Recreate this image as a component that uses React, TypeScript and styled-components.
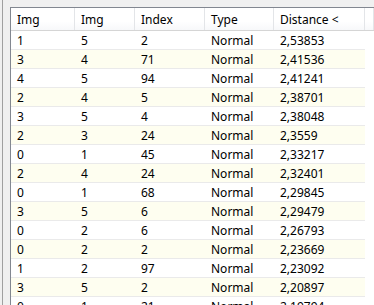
import React from 'react';
import styled, { createGlobalStyle } from 'styled-components';

const GlobalStyle = createGlobalStyle`
  html, body {
    margin: 0;
    padding: 0;
    background: #f0f0f0;
    overflow: hidden;
  }
  body {
    font-family: "Noto Sans", "Liberation Sans", sans-serif;
    font-size: 12px;
    color: #000;
  }
`;

const COLUMNS = '64px 60px 70px 69px 91px 1fr';

const Page = styled.div`
  height: 305px;
  padding-left: 2px;
  display: flex;
`;

const Splitter = styled.div`
  flex: 1;
  display: flex;
  border-left: 1px solid #a0a0a0;
  padding: 7px 0 0 7px;
`;

const ListView = styled.div`
  flex: 1;
  background: #fff;
  border-left: 1px solid #828790;
  border-top: 1px solid #828790;
  overflow: hidden;
`;

const HeaderRow = styled.div`
  display: grid;
  grid-template-columns: ${COLUMNS};
  height: 22px;
  background: linear-gradient(#ffffff, #ffffff 60%, #f7f8fa);
  border-bottom: 1px solid #d5d5d5;
`;

const HeaderCell = styled.div`
  display: flex;
  align-items: center;
  padding-left: 6px;
  border-right: 1px solid #e3e5e8;
  white-space: nowrap;
`;

const Row = styled.div<{ $striped: boolean }>`
  display: grid;
  grid-template-columns: ${COLUMNS};
  height: 19px;
  background: ${(p) => (p.$striped ? '#fefef0' : '#fff')};
`;

const Cell = styled.div`
  display: flex;
  align-items: center;
  padding-left: 6px;
  white-space: nowrap;
  border-bottom: 1px solid #eaeaea;
`;

const Filler = styled.div`
  background: #fff;
`;

const headers = ['Img', 'Img', 'Index', 'Type', 'Distance <'];

const rows: [number, number, number, string, string][] = [
  [1, 5, 2, 'Normal', '2,53853'],
  [3, 4, 71, 'Normal', '2,41536'],
  [4, 5, 94, 'Normal', '2,41241'],
  [2, 4, 5, 'Normal', '2,38701'],
  [3, 5, 4, 'Normal', '2,38048'],
  [2, 3, 24, 'Normal', '2,3559'],
  [0, 1, 45, 'Normal', '2,33217'],
  [2, 4, 24, 'Normal', '2,32401'],
  [0, 1, 68, 'Normal', '2,29845'],
  [3, 5, 6, 'Normal', '2,29479'],
  [0, 2, 6, 'Normal', '2,26793'],
  [0, 2, 2, 'Normal', '2,23669'],
  [1, 2, 97, 'Normal', '2,23092'],
  [3, 5, 2, 'Normal', '2,20897'],
  [0, 1, 21, 'Normal', '2,19794'],
];

const App: React.FC = () => (
  <>
    <GlobalStyle />
    <Page>
      <Splitter>
        <ListView>
          <HeaderRow>
            {headers.map((h, i) => (
              <HeaderCell key={i}>{h}</HeaderCell>
            ))}
            <HeaderCell />
          </HeaderRow>
          {rows.map((r, i) => (
            <Row key={i} $striped={i % 2 === 1}>
              {r.map((v, j) => (
                <Cell key={j}>{v}</Cell>
              ))}
              <Filler />
            </Row>
          ))}
        </ListView>
      </Splitter>
    </Page>
  </>
);

export default App;
